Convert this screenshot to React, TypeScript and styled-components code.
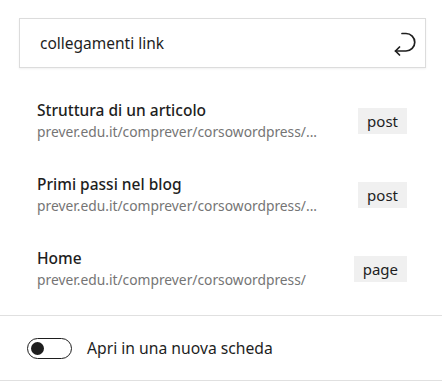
import React, { useState } from "react"
import styled, { createGlobalStyle } from "styled-components"

const GlobalStyle = createGlobalStyle`
  body {
    margin: 0;
    background: #fff;
    font-family: "Noto Sans", "Open Sans", sans-serif;
    color: #1e1e1e;
  }
`

interface LinkResult {
  title: string
  url: string
  kind: string
}

const results: LinkResult[] = [
  { title: "Struttura di un articolo", url: "prever.edu.it/comprever/corsowordpress/...", kind: "post" },
  { title: "Primi passi nel blog", url: "prever.edu.it/comprever/corsowordpress/...", kind: "post" },
  { title: "Home", url: "prever.edu.it/comprever/corsowordpress/", kind: "page" },
]

const EnterIcon = () => (
  <svg width="24" height="24" viewBox="0 0 24 24" fill="none">
    <path
      d="M9 1.5H13A8.75 8.75 0 0 1 13 19H2.5"
      stroke="#1e1e1e"
      strokeWidth="1.7"
      strokeLinecap="round"
    />
    <path
      d="M6.5 15L2.5 19L6.5 23"
      stroke="#1e1e1e"
      strokeWidth="1.7"
      strokeLinecap="round"
      strokeLinejoin="round"
    />
  </svg>
)

const App: React.FC = () => {
  const [query, setQuery] = useState("collegamenti link")
  const [newTab, setNewTab] = useState(false)

  return (
    <S.Panel>
      <GlobalStyle />
      <S.SearchBox>
        <S.SearchInput value={query} onChange={(e) => setQuery(e.target.value)} />
        <S.SubmitButton aria-label="Invia">
          <EnterIcon />
        </S.SubmitButton>
      </S.SearchBox>
      <S.ResultList>
        {results.map((r) => (
          <S.ResultItem key={r.title}>
            <S.ResultText>
              <S.ResultTitle>{r.title}</S.ResultTitle>
              <S.ResultUrl>{r.url}</S.ResultUrl>
            </S.ResultText>
            <S.KindBadge>{r.kind}</S.KindBadge>
          </S.ResultItem>
        ))}
      </S.ResultList>
      <S.Footer>
        <S.Toggle $on={newTab} onClick={() => setNewTab(!newTab)}>
          <S.Knob $on={newTab} />
        </S.Toggle>
        <S.ToggleLabel>Apri in una nuova scheda</S.ToggleLabel>
      </S.Footer>
    </S.Panel>
  )
}

const S = {
  Panel: styled.div`
    width: 442px;
    padding-top: 18px;
    border-bottom: 1px solid #e0e0e0;
  `,
  SearchBox: styled.div`
    margin: 0 16px 0 19px;
    height: 50px;
    box-sizing: border-box;
    display: flex;
    align-items: center;
    border: 1px solid #dcdcdc;
    box-shadow: 0 1px 2px rgba(0, 0, 0, 0.06);
    padding: 0 8px 0 20px;
  `,
  SearchInput: styled.input`
    flex: 1;
    border: none;
    outline: none;
    font-family: inherit;
    font-size: 15.5px;
    color: #1e1e1e;
    padding: 0;
    background: transparent;
  `,
  SubmitButton: styled.button`
    border: none;
    background: none;
    padding: 0;
    margin-top: 2px;
    display: flex;
    align-items: center;
    cursor: pointer;
  `,
  ResultList: styled.div`
    box-sizing: border-box;
    padding: 32px 35px 0 37px;
    height: 247px;
    display: flex;
    flex-direction: column;
    gap: 32px;
  `,
  ResultItem: styled.div`
    display: flex;
    align-items: center;
    justify-content: space-between;
  `,
  ResultText: styled.div`
    display: flex;
    flex-direction: column;
    gap: 2px;
  `,
  ResultTitle: styled.div`
    font-size: 15.5px;
    font-weight: 500;
    line-height: 20px;
    color: #1e1e1e;
  `,
  ResultUrl: styled.div`
    font-size: 13.8px;
    line-height: 20px;
    color: #757575;
  `,
  KindBadge: styled.span`
    background: #f0f0f0;
    font-size: 15px;
    line-height: 26px;
    padding: 0 9px;
    color: #1e1e1e;
  `,
  Footer: styled.div`
    border-top: 1px solid #e0e0e0;
    height: 65px;
    box-sizing: border-box;
    display: flex;
    align-items: center;
    gap: 15px;
    padding-left: 27px;
  `,
  Toggle: styled.div<{ $on: boolean }>`
    width: 45px;
    height: 21px;
    box-sizing: border-box;
    border-radius: 11px;
    border: 1.5px solid #1e1e1e;
    background: ${({ $on }) => ($on ? "#1e1e1e" : "#fff")};
    display: flex;
    align-items: center;
    padding: 0 3px;
    justify-content: ${({ $on }) => ($on ? "flex-end" : "flex-start")};
    cursor: pointer;
  `,
  Knob: styled.div<{ $on: boolean }>`
    width: 13px;
    height: 13px;
    border-radius: 50%;
    background: ${({ $on }) => ($on ? "#fff" : "#1e1e1e")};
  `,
  ToggleLabel: styled.span`
    font-size: 15.7px;
    color: #1e1e1e;
  `,
}

export default App
